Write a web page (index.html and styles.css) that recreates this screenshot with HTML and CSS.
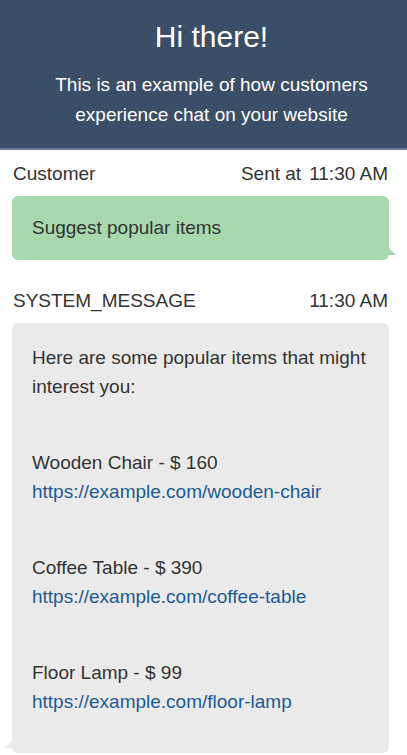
FILE: index.html
```html
<!DOCTYPE html>
<html>
<head>
<meta charset="utf-8">
<link rel="stylesheet" href="styles.css">
</head>
<body>
<header class="hero">
  <h1 class="hero-title">Hi there!</h1>
  <p class="hero-sub">This is an example of how customers experience chat on your website</p>
</header>
<main class="chat">
  <section class="msg">
    <div class="meta">
      <span class="who">Customer</span>
      <span class="time">Sent at<span class="clock">11:30 AM</span></span>
    </div>
    <div class="bubble bubble-out">
      <p class="para">Suggest popular items</p>
    </div>
  </section>
  <section class="msg msg-sys">
    <div class="meta">
      <span class="who">SYSTEM_MESSAGE</span>
      <span class="time">11:30 AM</span>
    </div>
    <div class="bubble bubble-in">
      <p class="para">Here are some popular items that might interest you:</p>
      <p class="para gap">Wooden Chair - $ 160<br><a class="link" href="#">https://example.com/wooden-chair</a></p>
      <p class="para gap">Coffee Table - $ 390<br><a class="link" href="#">https://example.com/coffee-table</a></p>
      <p class="para gap">Floor Lamp - $ 99<br><a class="link" href="#">https://example.com/floor-lamp</a></p>
    </div>
  </section>
</main>
</body>
</html>
```
FILE: styles.css
```css
* { box-sizing: border-box; }
html, body { margin: 0; padding: 0; }
body {
  font-family: "Liberation Sans", Arial, sans-serif;
  color: #333;
  background: #fff;
  width: 407px;
  overflow: hidden;
}
.hero {
  background: #3a4e68;
  border-bottom: 2px solid #6a7c94;
  color: #fff;
  text-align: center;
  padding: 20px 22px 18px 38px;
  height: 150px;
}
.hero-title {
  margin: 0;
  font-size: 30px;
  font-weight: normal;
  line-height: 34px;
}
.hero-sub {
  margin: 16px 0 0;
  font-size: 19px;
  line-height: 30px;
}
.chat {
  padding: 13px 18px 0 12px;
}
.msg-sys { margin-top: 30px; }
.meta {
  display: flex;
  justify-content: space-between;
  font-size: 19px;
  line-height: 22px;
  padding: 0 1px;
  margin-bottom: 11px;
}
.clock { margin-left: 8px; }
.bubble {
  position: relative;
  border-radius: 6px;
  padding: 21px 20px;
  font-size: 19px;
  line-height: 22px;
}
.bubble-out { background: #a8d8ae; }
.bubble-out::after {
  content: "";
  position: absolute;
  right: -7px;
  bottom: 5px;
  border-left: 9px solid #a8d8ae;
  border-top: 9px solid transparent;
}
.bubble-in {
  background: #eaeaea;
  line-height: 29px;
  padding: 20px 20px 37px;
}
.bubble-in::after {
  content: "";
  position: absolute;
  left: -7px;
  bottom: 5px;
  border-right: 9px solid #eaeaea;
  border-top: 9px solid transparent;
}
.para { margin: 0; }
.gap { margin-top: 47px; }
.link { color: #1b5a97; text-decoration: none; }
```
